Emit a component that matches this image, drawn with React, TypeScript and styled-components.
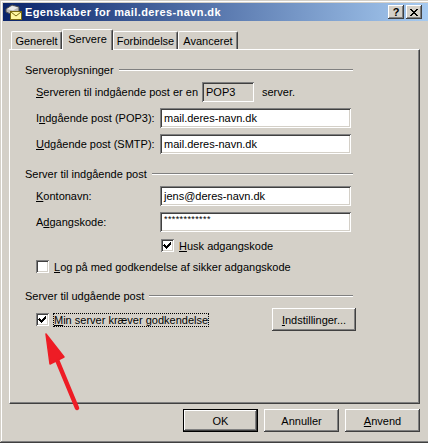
import React from 'react';
import styled, { createGlobalStyle, css } from 'styled-components';

const face = '#D4D0C8';

const GlobalStyle = createGlobalStyle`
  html, body {
    margin: 0;
    padding: 0;
    background: ${face};
    overflow: hidden;
  }
  body {
    font-family: "Liberation Sans", Arial, sans-serif;
    font-size: 11px;
    color: #000;
  }
`;

const raised = css`
  background: ${face};
  box-shadow: inset -1px -1px #404040, inset 1px 1px #fff, inset -2px -2px #808080,
    inset 2px 2px ${face};
`;

const sunken = css`
  box-shadow: inset 1px 1px #808080, inset -1px -1px #fff, inset 2px 2px #404040,
    inset -2px -2px ${face};
`;

const Window = styled.div`
  position: relative;
  width: 431px;
  height: 443px;
  box-sizing: border-box;
  padding: 3px;
  background: ${face};
  box-shadow: inset -1px -1px #404040, inset 1px 1px ${face}, inset -2px -2px #808080,
    inset 2px 2px #fff;
  display: flex;
  flex-direction: column;
`;

const TitleBar = styled.div`
  height: 18px;
  display: flex;
  align-items: center;
  padding: 0 6px 0 1px;
  background: linear-gradient(to right, #0a246a, #a6caf0);
`;

const TitleText = styled.span`
  margin-left: 3px;
  color: #fff;
  font-weight: bold;
  font-size: 11px;
  letter-spacing: 0.4px;
  flex: 1;
  white-space: nowrap;
`;

const CaptionButton = styled.div<{ $gap?: number }>`
  ${raised};
  width: 16px;
  height: 14px;
  margin-left: ${(p) => p.$gap ?? 0}px;
  display: flex;
  align-items: center;
  justify-content: center;
  font-weight: bold;
  font-size: 11px;
  line-height: 14px;
`;

const Body = styled.div`
  padding: 8px 8px 0 6px;
  display: flex;
  flex-direction: column;
`;

const TabRow = styled.div`
  display: flex;
  align-items: flex-end;
  height: 20px;
  padding-left: 2px;
  position: relative;
  z-index: 1;
`;

const Tab = styled.div<{ $w: number; $active?: boolean }>`
  width: ${(p) => p.$w}px;
  height: ${(p) => (p.$active ? 21 : 18)}px;
  margin-bottom: ${(p) => (p.$active ? -1 : 0)}px;
  box-sizing: border-box;
  background: ${face};
  border-top: 1px solid #fff;
  border-left: 1px solid #fff;
  border-right: 1px solid #404040;
  border-top-left-radius: 2px;
  border-top-right-radius: 2px;
  box-shadow: inset -1px 0 #808080;
  display: flex;
  align-items: center;
  justify-content: center;
  padding-bottom: ${(p) => (p.$active ? 2 : 0)}px;
`;

const Panel = styled.div`
  width: 411px;
  height: 355px;
  box-sizing: border-box;
  background: ${face};
  border-top: 1px solid #fff;
  border-left: 1px solid #fff;
  border-right: 1px solid #404040;
  border-bottom: 1px solid #404040;
  box-shadow: inset -1px -1px #808080;
  padding: 0 66px 0 15px;
  display: flex;
  flex-direction: column;
`;

const GroupHeader = styled.div<{ $mt: number }>`
  display: flex;
  align-items: center;
  height: 13px;
  margin-top: ${(p) => p.$mt}px;
  white-space: nowrap;
`;

const Etched = styled.div`
  flex: 1;
  margin-left: 5px;
  height: 0;
  border-top: 1px solid #808080;
  border-bottom: 1px solid #fff;
`;

const Row = styled.div<{ $mt: number; $h: number; $mr?: number }>`
  display: flex;
  align-items: center;
  height: ${(p) => p.$h}px;
  margin-top: ${(p) => p.$mt}px;
  margin-right: ${(p) => p.$mr ?? 0}px;
  padding-left: 11px;
  white-space: nowrap;
`;

const Label = styled.span<{ $w: number }>`
  width: ${(p) => p.$w}px;
  flex-shrink: 0;
`;

const Field = styled.div<{ $w: number; $gray?: boolean; $small?: boolean }>`
  ${sunken};
  width: ${(p) => p.$w}px;
  height: 20px;
  box-sizing: border-box;
  padding: ${(p) => (p.$small ? '2px 0 0 4px' : '0 0 0 4px')};
  display: flex;
  align-items: ${(p) => (p.$small ? 'flex-start' : 'center')};
  background: ${(p) => (p.$gray ? face : '#fff')};
  font-size: ${(p) => (p.$small ? 9 : 11)}px;
  letter-spacing: ${(p) => (p.$small ? 0.4 : 0)}px;
`;

const Suffix = styled.span`
  margin-left: 8px;
`;

const Box = styled.div<{ $ml?: number }>`
  width: 13px;
  height: 13px;
  box-sizing: border-box;
  flex-shrink: 0;
  margin-left: ${(p) => p.$ml ?? 0}px;
  background: #fff;
  ${sunken};
  display: flex;
  align-items: center;
  justify-content: center;
`;

const BoxText = styled.span<{ $focus?: boolean }>`
  margin-left: 4px;
  padding: 1px 1px;
  outline: ${(p) => (p.$focus ? '1px dotted #000' : 'none')};
  outline-offset: -1px;
`;

const PushButton = styled.div<{ $w: number; $default?: boolean }>`
  ${raised};
  width: ${(p) => p.$w}px;
  height: 23px;
  box-sizing: border-box;
  display: flex;
  align-items: center;
  justify-content: center;
  ${(p) =>
    p.$default &&
    css`
      border: 1px solid #000;
    `}
`;

const Spacer = styled.div`
  flex: 1;
`;

const ButtonRow = styled.div`
  display: flex;
  justify-content: flex-end;
  gap: 6px;
  margin-top: 5px;
`;

const Overlay = styled.svg`
  position: absolute;
  left: 0;
  top: 0;
  pointer-events: none;
`;

const Check = () => (
  <svg width="9" height="9" viewBox="0 0 9 9" shapeRendering="crispEdges">
    <path d="M1 3h1v1h1v1h1v-1h1v-1h1v-1h1v-1h1v3h-1v1h-1v1h-1v1h-1v1h-1v-1h-1v-1h-1v-1h-1z" fill="#000" />
  </svg>
);

const MailIcon = () => (
  <svg width="18" height="16" viewBox="0 0 18 16">
    <path d="M2 5 L8 1 L15 3 L15 8 L9 11 L2 8 Z" fill="#b8b8b8" stroke="#505050" strokeWidth="1" />
    <path d="M3 5 L8 2 L14 3.6 L9 6.5 Z" fill="#eaeaea" />
    <rect x="6.5" y="7.5" width="11" height="8" fill="#fff7a0" stroke="#7a6a10" strokeWidth="1" />
    <path d="M7 8 L12 12 L17 8" fill="none" stroke="#7a6a10" strokeWidth="1" />
  </svg>
);

export default function App() {
  return (
    <>
      <GlobalStyle />
      <Window>
        <TitleBar>
          <MailIcon />
          <TitleText>Egenskaber for mail.deres-navn.dk</TitleText>
          <CaptionButton>?</CaptionButton>
          <CaptionButton $gap={2}>
            <svg width="8" height="7" viewBox="0 0 8 7" shapeRendering="crispEdges">
              <path d="M0 0h2v1h1v1h2v-1h1v-1h2v1h-1v1h-1v1h-1v1h1v1h1v1h1v1h-2v-1h-1v-1h-2v1h-1v1h-2v-1h1v-1h1v-1h1v-1h-1v-1h-1v-1h-1z" fill="#000" />
            </svg>
          </CaptionButton>
        </TitleBar>

        <Body>
          <TabRow>
            <Tab $w={51}>Generelt</Tab>
            <Tab $w={51} $active>Servere</Tab>
            <Tab $w={65}>Forbindelse</Tab>
            <Tab $w={60}>Avanceret</Tab>
          </TabRow>
          <Panel>
            <GroupHeader $mt={13}>
              Serveroplysninger
              <Etched />
            </GroupHeader>
            <Row $mt={6} $h={20}>
              <Label $w={166}>
                <u>S</u>erveren til indgående post er en
              </Label>
              <Field $w={52} $gray>POP3</Field>
              <Suffix>server.</Suffix>
            </Row>
            <Row $mt={6} $h={20}>
              <Label $w={124}>
                I<u>n</u>dgående post (POP3):
              </Label>
              <Field $w={191}>mail.deres-navn.dk</Field>
            </Row>
            <Row $mt={6} $h={20}>
              <Label $w={124}>
                <u>U</u>dgående post (SMTP):
              </Label>
              <Field $w={191}>mail.deres-navn.dk</Field>
            </Row>

            <GroupHeader $mt={13}>
              Server til indgående post
              <Etched />
            </GroupHeader>
            <Row $mt={6} $h={20}>
              <Label $w={124}>
                <u>K</u>ontonavn:
              </Label>
              <Field $w={191}>jens@deres-navn.dk</Field>
            </Row>
            <Row $mt={6} $h={20}>
              <Label $w={124}>
                A<u>d</u>gangskode:
              </Label>
              <Field $w={191} $small>
                ************
              </Field>
            </Row>
            <Row $mt={7} $h={13}>
              <Box $ml={125}>
                <Check />
              </Box>
              <BoxText>
                <u>H</u>usk adgangskode
              </BoxText>
            </Row>
            <Row $mt={8} $h={13}>
              <Box />
              <BoxText>
                <u>L</u>og på med godkendelse af sikker adgangskode
              </BoxText>
            </Row>

            <GroupHeader $mt={16}>
              Server til udgående post
              <Etched />
            </GroupHeader>
            <Row $mt={6} $h={23} $mr={-3}>
              <Box>
                <Check />
              </Box>
              <BoxText $focus>
                <u>M</u>in server kræver godkendelse
              </BoxText>
              <Spacer />
              <PushButton $w={84}>
                <span>
                  <u>I</u>ndstillinger...
                </span>
              </PushButton>
            </Row>
          </Panel>
          <ButtonRow>
            <PushButton $w={75} $default>
              OK
            </PushButton>
            <PushButton $w={75}>Annuller</PushButton>
            <PushButton $w={75}>
              <span>
                <u>A</u>nvend
              </span>
            </PushButton>
          </ButtonRow>
        </Body>

        <Overlay width="431" height="443" viewBox="0 0 431 443">
          <line x1="77" y1="408" x2="55" y2="355" stroke="#ee1c25" strokeWidth="4.5" strokeLinecap="round" />
          <path d="M46 334 L64 357 L50 364 Z" fill="#ee1c25" stroke="#ee1c25" strokeWidth="1.5" strokeLinejoin="round" />
        </Overlay>
      </Window>
    </>
  );
}
